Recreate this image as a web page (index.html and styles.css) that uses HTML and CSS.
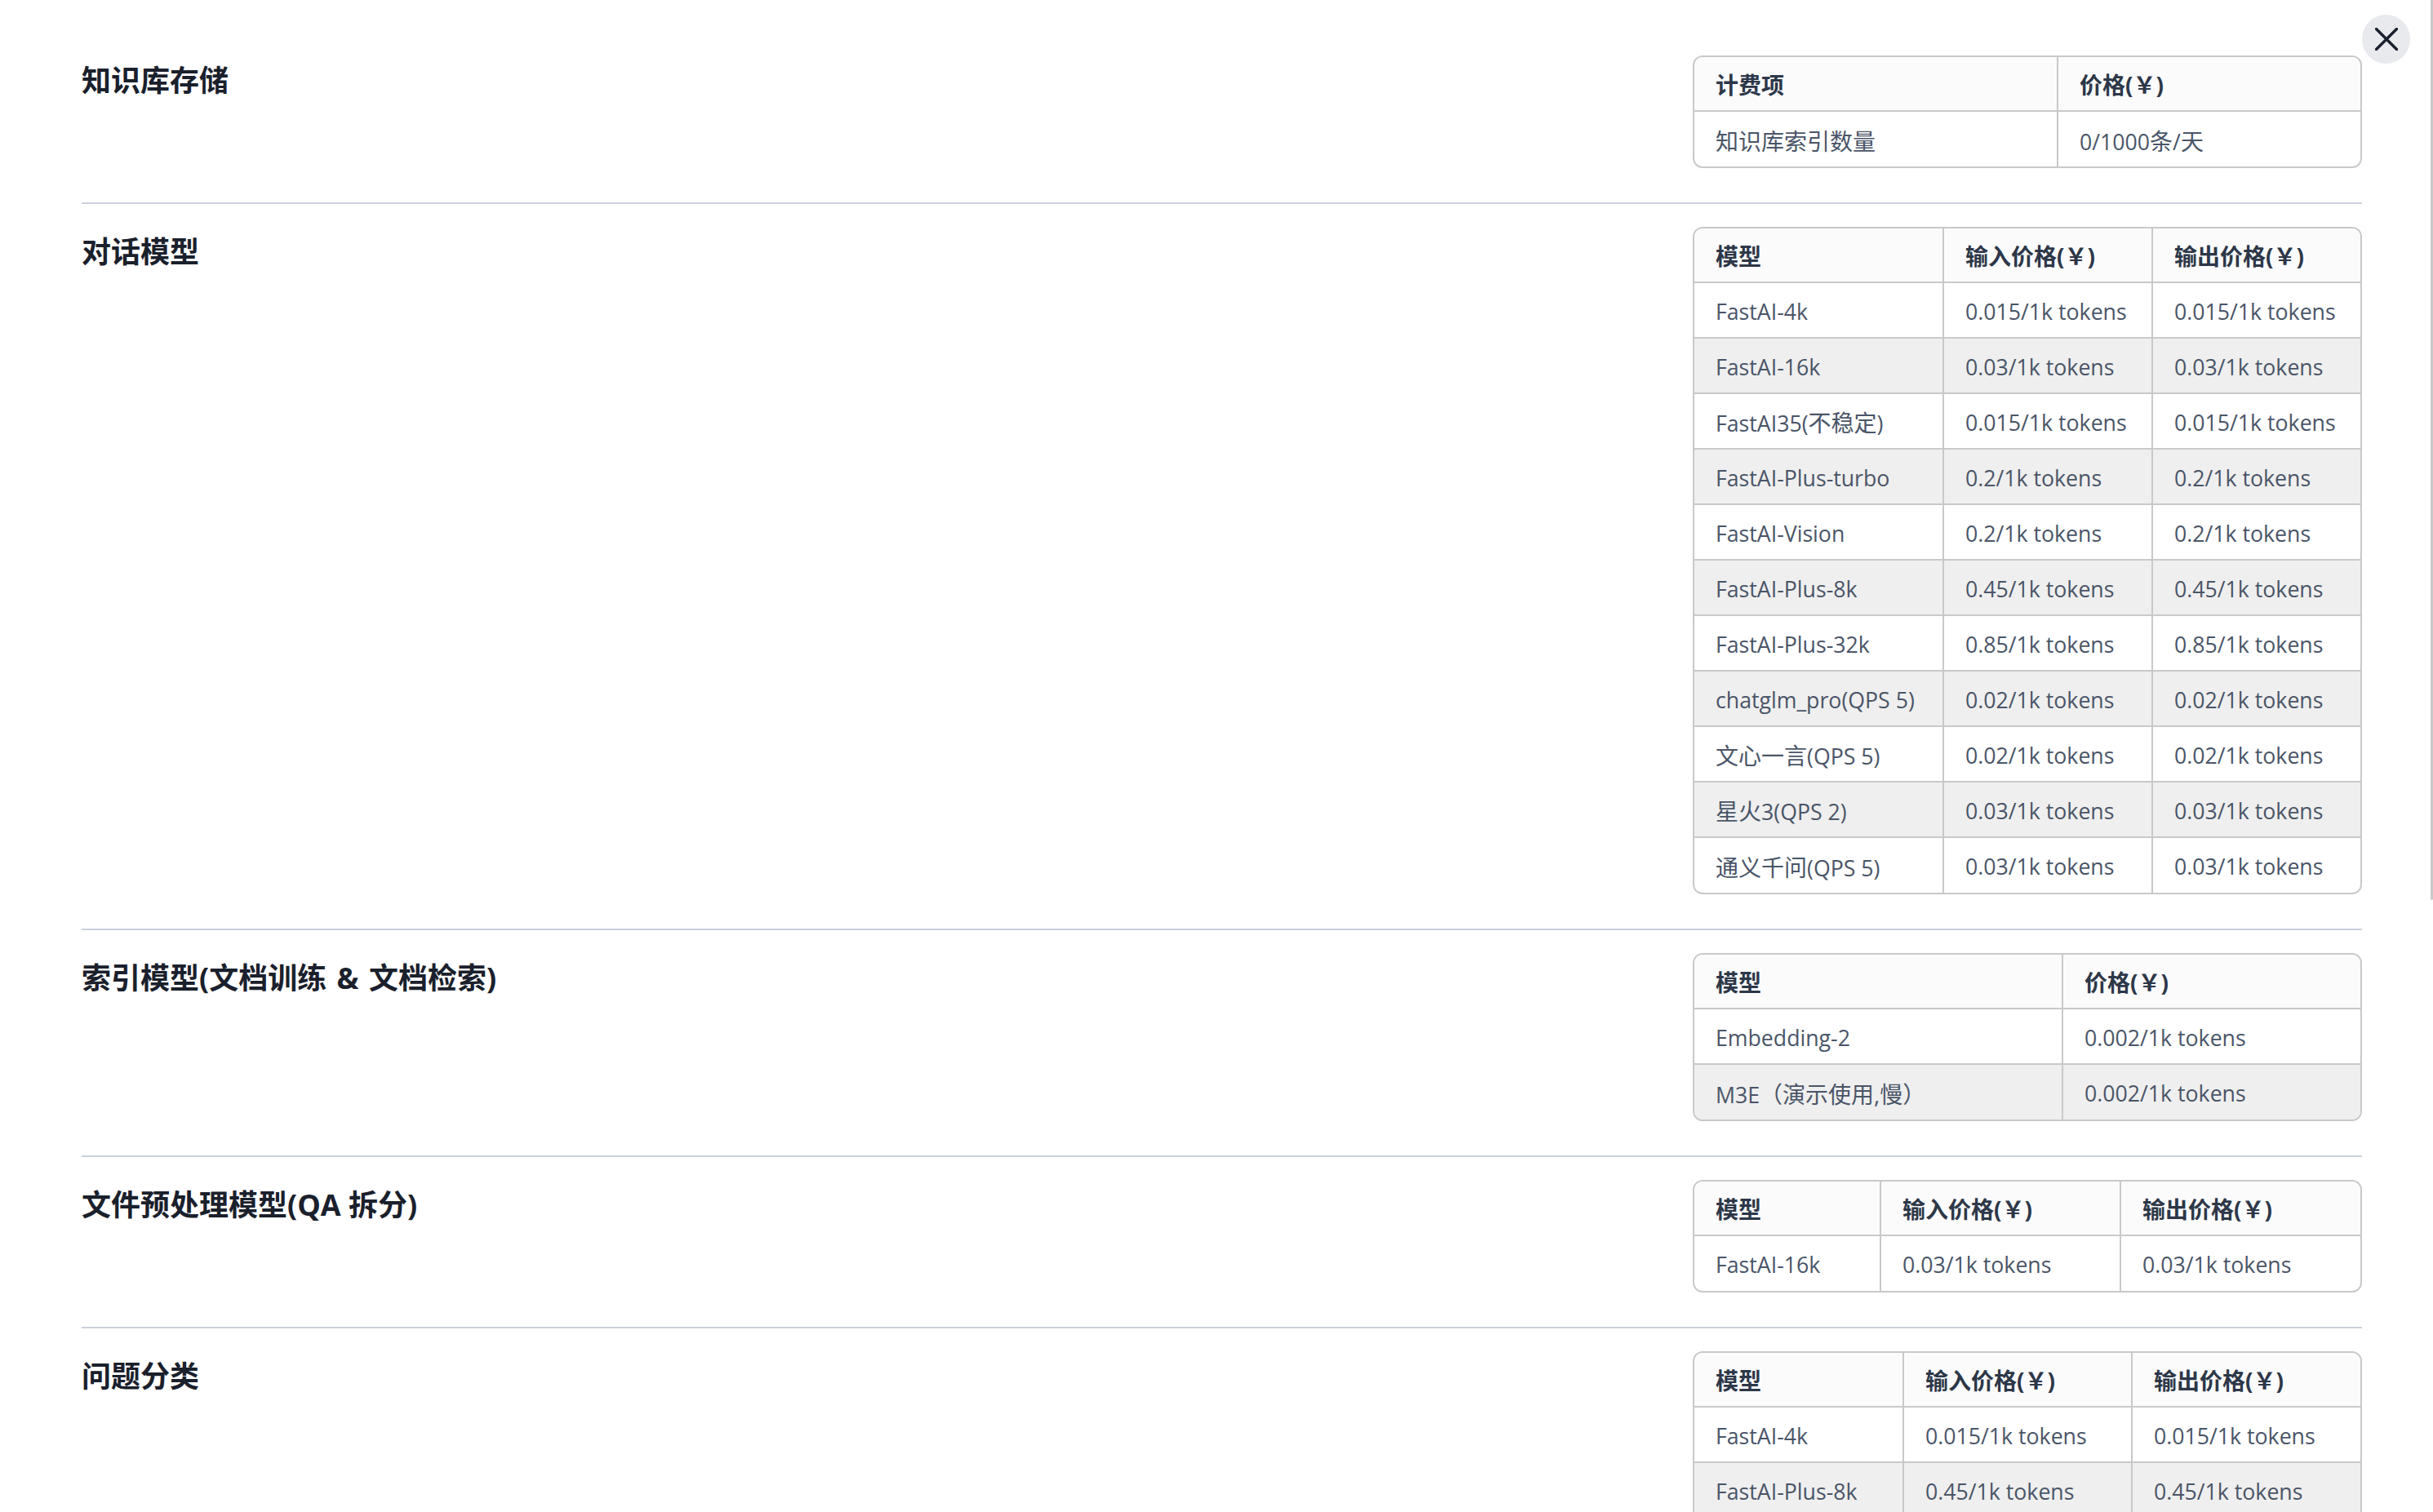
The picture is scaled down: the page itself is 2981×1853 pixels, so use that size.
FILE: index.html
```html
<!DOCTYPE html>
<html lang="zh-CN">
<head>
<meta charset="utf-8">
<title>计费标准</title>
<link rel="stylesheet" href="styles.css">
</head>
<body>
<main class="modal">
  <button class="close" aria-label="关闭">
    <svg viewBox="0 0 28 28" width="28" height="28"><path d="M1.5 1.5 26.5 26.5M26.5 1.5 1.5 26.5"/></svg>
  </button>
  <section class="row s1">
    <h2>知识库存储</h2>
    <div class="wrap"><table>
      <colgroup><col class="c446"><col></colgroup>
      <thead><tr><th>计费项</th><th>价格(￥)</th></tr></thead>
      <tbody><tr><td><span class="zh">知识库索引数量</span></td><td>0/1000<span class="zh">条</span>/<span class="zh">天</span></td></tr></tbody>
    </table></div>
  </section>
  <section class="row">
    <h2>对话模型</h2>
    <div class="wrap"><table>
      <colgroup><col class="c306"><col class="c256"><col></colgroup>
      <thead><tr><th>模型</th><th>输入价格(￥)</th><th>输出价格(￥)</th></tr></thead>
      <tbody>
        <tr><td>FastAI-4k</td><td>0.015/1k tokens</td><td>0.015/1k tokens</td></tr>
        <tr><td>FastAI-16k</td><td>0.03/1k tokens</td><td>0.03/1k tokens</td></tr>
        <tr><td>FastAI35(<span class="zh">不稳定</span>)</td><td>0.015/1k tokens</td><td>0.015/1k tokens</td></tr>
        <tr><td>FastAI-Plus-turbo</td><td>0.2/1k tokens</td><td>0.2/1k tokens</td></tr>
        <tr><td>FastAI-Vision</td><td>0.2/1k tokens</td><td>0.2/1k tokens</td></tr>
        <tr><td>FastAI-Plus-8k</td><td>0.45/1k tokens</td><td>0.45/1k tokens</td></tr>
        <tr><td>FastAI-Plus-32k</td><td>0.85/1k tokens</td><td>0.85/1k tokens</td></tr>
        <tr><td>chatglm_pro(QPS 5)</td><td>0.02/1k tokens</td><td>0.02/1k tokens</td></tr>
        <tr><td><span class="zh">文心一言</span>(QPS 5)</td><td>0.02/1k tokens</td><td>0.02/1k tokens</td></tr>
        <tr><td><span class="zh">星火</span>3(QPS 2)</td><td>0.03/1k tokens</td><td>0.03/1k tokens</td></tr>
        <tr><td><span class="zh">通义千问</span>(QPS 5)</td><td>0.03/1k tokens</td><td>0.03/1k tokens</td></tr>
      </tbody>
    </table></div>
  </section>
  <section class="row">
    <h2>索引模型(文档训练 <span class="amp">&amp;</span> 文档检索)</h2>
    <div class="wrap"><table>
      <colgroup><col class="c452"><col></colgroup>
      <thead><tr><th>模型</th><th>价格(￥)</th></tr></thead>
      <tbody>
        <tr><td>Embedding-2</td><td>0.002/1k tokens</td></tr>
        <tr><td>M3E<span class="zh">（演示使用,慢）</span></td><td>0.002/1k tokens</td></tr>
      </tbody>
    </table></div>
  </section>
  <section class="row">
    <h2>文件预处理模型(QA 拆分)</h2>
    <div class="wrap"><table>
      <colgroup><col class="c229"><col class="c294"><col></colgroup>
      <thead><tr><th>模型</th><th>输入价格(￥)</th><th>输出价格(￥)</th></tr></thead>
      <tbody><tr><td>FastAI-16k</td><td>0.03/1k tokens</td><td>0.03/1k tokens</td></tr></tbody>
    </table></div>
  </section>
  <section class="row">
    <h2>问题分类</h2>
    <div class="wrap"><table>
      <colgroup><col class="c257"><col class="c280"><col></colgroup>
      <thead><tr><th>模型</th><th>输入价格(￥)</th><th>输出价格(￥)</th></tr></thead>
      <tbody>
        <tr><td>FastAI-4k</td><td>0.015/1k tokens</td><td>0.015/1k tokens</td></tr>
        <tr><td>FastAI-Plus-8k</td><td>0.45/1k tokens</td><td>0.45/1k tokens</td></tr>
      </tbody>
    </table></div>
  </section>
</main>
<div class="thumb"></div>
</body>
</html>
```
FILE: styles.css
```css
* { box-sizing: border-box; }
html, body { margin: 0; height: 100%; overflow: hidden; background: #fff; }
body { font-family: "Open Sans", "Noto Sans CJK SC", sans-serif; color: #1a202c; }
.modal { position: relative; height: 1853px; overflow: hidden; padding: 0 87px 0 100px; }
.row { display: flex; justify-content: space-between; align-items: flex-start; padding: 28.1px 0 42px; border-bottom: 2px solid #cbd0dc; }
.row.s1 { padding-top: 68px; }
.row:last-child { border-bottom: 0; }
h2 { margin: 5.5px 0 0; font-size: 36px; line-height: 50px; font-weight: 700; color: #1a202c; }
.amp { margin: 0 3px; }
.wrap { width: 820px; border: 2px solid #c9c9c9; border-radius: 12px; overflow: hidden; flex: none; }
table { width: 100%; border-collapse: separate; border-spacing: 0; table-layout: fixed; font-size: 28px; }
.c446 { width: 446px; }
.c306 { width: 306px; }
.c256 { width: 256px; }
.c452 { width: 452px; }
.c229 { width: 229px; }
.c294 { width: 294px; }
.c257 { width: 257px; }
.c280 { width: 280px; }
th, td { height: 68px; padding: 0 25px 0 26px; text-align: left; white-space: nowrap; border-right: 2px solid #c9c9c9; border-bottom: 2px solid #c9c9c9; }
th:last-child, td:last-child { border-right: 0; }
tbody tr:last-child td { border-bottom: 0; height: 67px; }
th { height: 67px; background: #fbfbfc; color: #2d3748; font-weight: 700; }
td { padding-top: 2px; color: #4a5568; font-weight: 400; font-size: 26.7px; }
.zh { font-size: 28px; }
tbody tr:nth-child(even) td { background: #efefef; }
.close { position: absolute; top: 18px; right: 28px; width: 59px; height: 60px; padding: 0; border: 0; border-radius: 50%; background: #e8eaee; display: flex; align-items: center; justify-content: center; }
.close path { fill: none; stroke: #1a202c; stroke-width: 3.4; stroke-linecap: round; }
.thumb { position: fixed; top: 0; right: 0; width: 3px; height: 1103px; background: #c9c9c9; border-radius: 0 0 3px 3px; }
```
